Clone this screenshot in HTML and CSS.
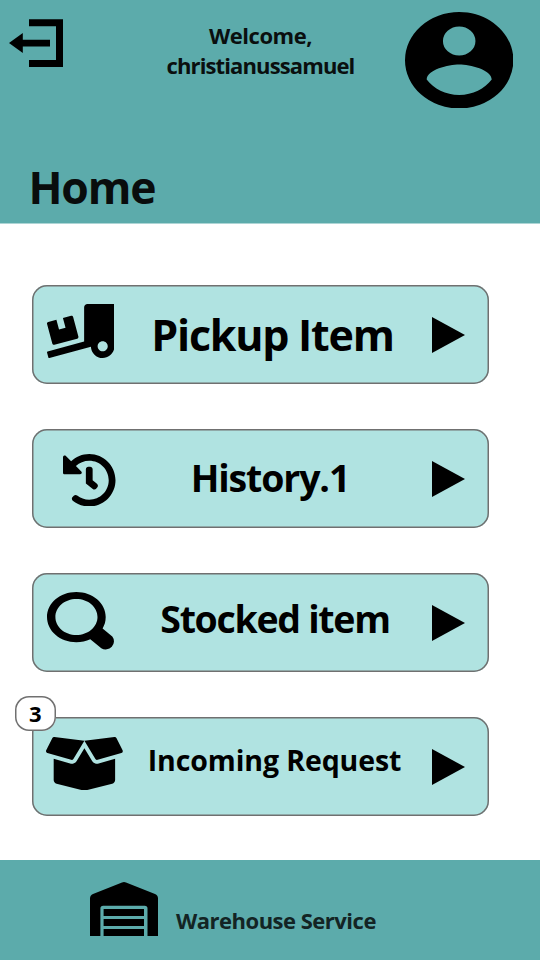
FILE: index.html
```
<!DOCTYPE html>
<html lang="en">
<head>
<meta charset="utf-8">
<title>Home</title>
<link rel="stylesheet" href="styles.css">
</head>
<body>
<div class="screen">
  <header class="header">
    <div class="topbar">
      <svg class="logout" viewBox="9 19 54 48"><path d="M29 19.3H63V67H29V60H56V26.3H29zM9 43L22.8 33V39.7H50V46.5H22.8V53z"/></svg>
      <p class="welcome"><span class="hello">Welcome,</span><br><span class="user">christianussamuel</span></p>
      <svg class="avatar" viewBox="2 2 20 20" preserveAspectRatio="none"><path d="M12,19.2C9.5,19.2 7.29,17.92 6,16C6.03,14 10,12.9 12,12.9C14,12.9 17.97,14 18,16C16.71,17.92 14.5,19.2 12,19.2M12,5A3,3 0 0,1 15,8A3,3 0 0,1 12,11A3,3 0 0,1 9,8A3,3 0 0,1 12,5M12,2A10,10 0 0,0 2,12A10,10 0 0,0 12,22A10,10 0 0,0 22,12C22,6.47 17.5,2 12,2Z"/></svg>
    </div>
    <h1 class="title">Home</h1>
  </header>
  <main class="menu">
    <a class="card">
      <svg class="icon truck" viewBox="0 0 640 512"><path d="M50.2 375.6c2.3 8.5 11.1 13.6 19.6 11.3l216.4-58c8.5-2.3 13.6-11.1 11.3-19.6l-49.7-185.5c-2.3-8.5-11.1-13.6-19.6-11.3L151 133.3l24.8 92.7-61.8 16.5-24.8-92.7-77.3 20.7C3.4 172.8-1.7 181.6.6 190.1l49.6 185.5zM384 0c-17.7 0-32 14.3-32 32v323.6L5.9 450c-4.3 1.2-6.8 5.6-5.6 9.8l12.6 46.3c1.2 4.3 5.6 6.8 9.8 5.6l393.7-107.4C418.8 464.1 467.6 512 528 512c61.9 0 112-50.1 112-112V0H384zm144 448c-26.5 0-48-21.5-48-48s21.5-48 48-48 48 21.5 48 48-21.5 48-48 48z"/></svg>
      <span class="label pickup">Pickup Item</span>
      <svg class="arrow" viewBox="0 0 33 36"><path d="M0 0L33 18L0 36z"/></svg>
    </a>
    <a class="card">
      <svg class="icon clock" viewBox="8 8 496 496"><path d="M504 255.531c.253 136.64-111.18 248.372-247.82 248.468-59.015.042-113.223-20.53-155.822-54.911-11.077-8.94-11.905-25.541-1.839-35.607l11.267-11.267c8.609-8.609 22.353-9.551 31.891-1.984C173.062 425.135 212.781 440 256 440c101.705 0 184-82.311 184-184 0-101.705-82.311-184-184-184-48.814 0-93.149 18.969-126.068 49.932l50.754 50.754c10.08 10.08 2.941 27.314-11.313 27.314H24c-8.837 0-16-7.163-16-16V38.627c0-14.254 17.234-21.393 27.314-11.314l49.372 49.372C129.209 34.136 189.552 8 256 8c136.81 0 247.747 110.78 248 247.531zm-180.912 78.784l9.823-12.63c8.138-10.463 6.253-25.542-4.21-33.679L288 256.349V152c0-13.255-10.745-24-24-24h-16c-13.255 0-24 10.745-24 24v135.651l65.409 50.874c10.463 8.137 25.541 6.253 33.679-4.21z"/></svg>
      <span class="label history">History.1</span>
      <svg class="arrow" viewBox="0 0 33 36"><path d="M0 0L33 18L0 36z"/></svg>
    </a>
    <a class="card">
      <svg class="icon search" viewBox="0 0 68 58"><path fill-rule="evenodd" d="M29.3 0C45.6 0 58.7 11.2 58.7 25C58.7 29.5 57.6 33 55.600 36.500L65.300 44.600A8.300 8 0 0 1 54.300 56.200L43.300 47.200C39 49.200 34.500 50.200 29.300 50.200C13 50.200 0 39 0 25S13 0 29.300 0zM29.400 7C17.700 7 8.400 15 8.400 25S17.700 43 29.400 43S50.500 35 50.500 25S41.100 7 29.400 7z"/></svg>
      <span class="label stocked">Stocked item</span>
      <svg class="arrow" viewBox="0 0 33 36"><path d="M0 0L33 18L0 36z"/></svg>
    </a>
    <a class="card">
      <span class="badge">3</span>
      <svg class="icon box" viewBox="0 32 640 448" preserveAspectRatio="none"><path d="M425.7 256c-16.9 0-32.8-9-41.4-23.4L320 126l-64.2 106.6c-8.7 14.5-24.6 23.5-41.5 23.5-4.5 0-9-.6-13.3-1.9L64 215v178c0 14.7 10 27.5 24.2 31l216.2 54.1c10.2 2.5 20.9 2.5 31 0L551.8 424c14.2-3.6 24.2-16.4 24.2-31V215l-137 39.1c-4.3 1.3-8.8 1.9-13.3 1.9zm212.6-112.2L586.8 41c-3.1-6.2-9.8-9.8-16.7-8.9L320 64l91.7 152.1c3.8 6.3 11.4 9.3 18.5 7.3l197.9-56.5c9.9-2.9 14.7-13.9 10.2-23.1zM53.2 41L1.7 143.8c-4.6 9.2.3 20.2 10.1 23l197.9 56.5c7.1 2 14.7-1 18.5-7.3L320 64 69.8 32.1c-6.9-.8-13.5 2.7-16.6 8.9z"/></svg>
      <span class="label incoming">Incoming Request</span>
      <svg class="arrow" viewBox="0 0 33 36"><path d="M0 0L33 18L0 36z"/></svg>
    </a>
  </main>
  <footer class="footer">
    <svg class="warehouse" viewBox="0 0 68 54"><path d="M0 54V16.5Q0 13.5 3 12.1L32 .5Q34 -.3 36 .5L65 12.1Q68 13.5 68 16.5V54H57.5V26.5Q57.5 23.7 54.7 23.7H13.2Q10.4 23.7 10.4 26.5V54zM13.6 27H54V34H13.6zM13.6 37H54V44H13.6zM13.6 47H54V54H13.6z"/></svg>
    <span class="service">Warehouse Service</span>
  </footer>
</div>
</body>
</html>
```
FILE: styles.css
```
* { box-sizing: border-box; }

body {
  margin: 0;
  background: #fff;
  color: #000;
  font-family: "Open Sans", "Noto Sans", sans-serif;
  font-weight: 700;
}

svg { display: block; }

.screen {
  display: flex;
  flex-direction: column;
  width: 540px;
  height: 960px;
  overflow: hidden;
}

.header {
  height: 223px;
  background: #5cabab;
  box-shadow: 0 0.5px 0 #5cabab;
}

.topbar {
  display: grid;
  grid-template-columns: 54px 1fr 108.4px;
  height: 158px;
  padding: 0 26.6px 0 9px;
  align-items: start;
}

.logout { width: 54px; height: 48px; margin-top: 19px; }

.welcome {
  width: 342px;
  margin: 20px 0 0;
  padding-left: 53px;
  text-align: center;
  white-space: nowrap;
  font-size: 22px;
  line-height: 30px;
  color: #0a0f0f;
}

.hello { letter-spacing: -0.45px; }
.user { letter-spacing: -0.88px; }

.avatar { width: 108.4px; height: 96.5px; margin-top: 11.8px; }

.title {
  margin: 0;
  padding-left: 28.5px;
  font-size: 44.5px;
  line-height: 57px;
  font-weight: 700;
  letter-spacing: -1.2px;
  color: #090d0d;
}

.menu {
  display: flex;
  flex-direction: column;
  gap: 45px;
  flex: 1;
  padding: 62px 0 0 31.5px;
}

.card {
  position: relative;
  display: grid;
  grid-template-columns: 88.5px 305px 1fr;
  align-items: start;
  width: 457.5px;
  height: 99px;
  border-radius: 15px;
  background: #b0e3e1;
  box-shadow: inset 0 0 0 1.5px #707070;
}

.label {
  text-align: center;
  white-space: nowrap;
  line-height: 60px;
}

.pickup { font-size: 43px; padding-top: 20px; letter-spacing: -1.25px; }
.history { font-size: 37.5px; padding-top: 19px; padding-right: 5px; letter-spacing: -1.15px; }
.stocked { font-size: 37.5px; padding-top: 16px; padding-left: 5px; letter-spacing: -1.3px; }
.incoming { font-size: 28.5px; padding-top: 13px; padding-left: 4px; letter-spacing: -0.1px; }

.truck { width: 67.5px; height: 54px; margin: 19.3px 0 0 15px; }
.clock { width: 52.5px; height: 52.5px; margin: 24.9px 0 0 31.5px; }
.search { width: 68px; height: 58px; margin: 19px 0 0 15px; }
.box { width: 76.8px; height: 53.5px; margin: 19.8px 0 0 14.9px; }

.arrow { width: 33px; height: 36px; margin: 31.6px 0 0 7px; }

.badge {
  position: absolute;
  left: -16.5px;
  top: -21px;
  width: 40.5px;
  height: 34.5px;
  border-radius: 14px;
  background: #fff;
  box-shadow: inset 0 0 0 1.5px #707070;
  text-align: center;
  font-size: 22px;
  line-height: 34px;
}

.footer {
  display: flex;
  align-items: flex-start;
  height: 100.5px;
  padding-left: 90px;
  background: #5cabab;
}

.warehouse { width: 68px; height: 54px; margin-top: 22.5px; }

.service {
  margin: 45.5px 0 0 18px;
  font-size: 22px;
  line-height: 30px;
  letter-spacing: -0.5px;
  color: #132424;
}
```
